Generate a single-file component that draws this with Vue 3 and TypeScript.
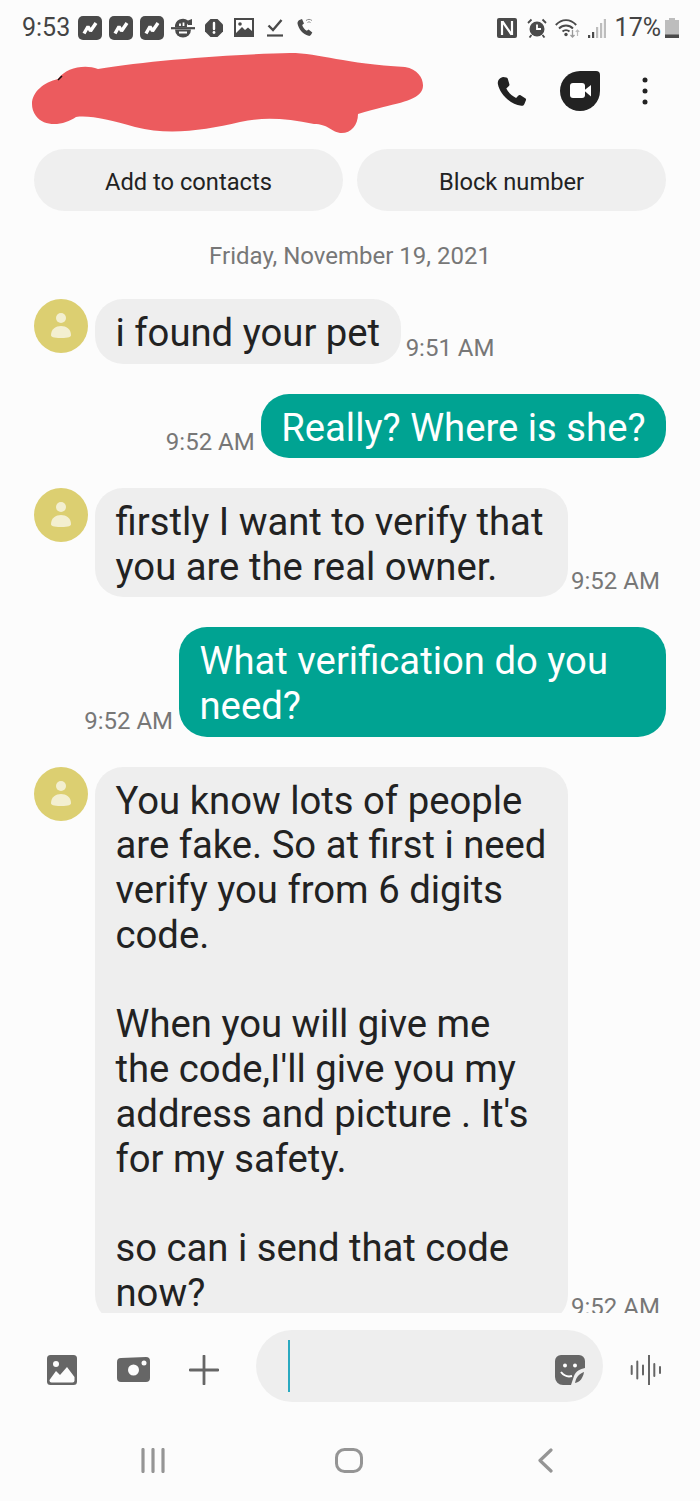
<script setup lang="ts">
interface Message {
  id: number;
  side: 'in' | 'out';
  time: string;
  lines: string;
}

const messages: Message[] = [
  { id: 1, side: 'in', time: '9:51 AM', lines: 'i found your pet' },
  { id: 2, side: 'out', time: '9:52 AM', lines: 'Really? Where is she?' },
  { id: 3, side: 'in', time: '9:52 AM', lines: 'firstly I want to verify that\nyou are the real owner.' },
  { id: 4, side: 'out', time: '9:52 AM', lines: 'What verification do you\nneed?' },
  {
    id: 5,
    side: 'in',
    time: '9:52 AM',
    lines:
      "You know lots of people\nare fake. So at first i need\nverify you from 6 digits\ncode.\n\nWhen you will give me\nthe code,I'll give you my\naddress and picture . It's\nfor my safety.\n\nso can i send that code\nnow?"
  }
];

// wrapped bubbles stretch to the max width
const isWide = (m: Message) => m.lines.includes('\n');
</script>

<template>
  <div class="phone">
    <div class="status">
      <div class="status-left">
        <span class="clock">9:53</span>
        <svg v-for="n in 3" :key="n" class="tile" viewBox="0 0 24 24">
          <rect width="24" height="24" rx="5" fill="#4a4a4a" />
          <path d="M6 17.500 10 10.500 12.500 15 18 7" fill="none" stroke="#fff" stroke-width="3.400" stroke-linejoin="bevel" />
        </svg>
        <svg class="ic-lines" viewBox="0 0 24 24">
          <path d="M4 11a8 8 0 0 1 13-6.500L21 3v6h-4l-.5-1.500A5 5 0 0 0 16 11Z" fill="#4a4a4a" />
          <path d="M4 13.500h16a8 8 0 0 1-16 0Z" fill="#4a4a4a" />
          <path d="M0 12.200h24" stroke="#4a4a4a" stroke-width="2.200" />
          <path d="M9 7.500v2.500M12.500 6.500v3.500M8 16.500h8" stroke="#fff" stroke-width="1.800" />
        </svg>
        <svg class="ic-alert" viewBox="0 0 18 18">
          <path d="M5.500 0h7L18 5.500v7L12.500 18h-7L0 12.500v-7Z" fill="#4a4a4a" />
          <path d="M9 4v6" stroke="#fff" stroke-width="2.400" stroke-linecap="round" />
          <circle cx="9" cy="13.500" r="1.400" fill="#fff" />
        </svg>
        <svg class="ic-image" viewBox="0 0 20 20">
          <rect width="20" height="19" fill="#4a4a4a" />
          <rect x="2" y="2" width="16" height="13" fill="#fff" />
          <path d="M2 15 8 9l3 3 3-2.500 4 3.500v4H2Z" fill="#4a4a4a" />
          <circle cx="6" cy="6" r="1.800" fill="#4a4a4a" />
        </svg>
        <svg class="ic-check" viewBox="0 0 18 20">
          <path d="M2.500 7.500 7 12 15.500 2" fill="none" stroke="#4a4a4a" stroke-width="2.400" />
          <path d="M1 17.500h16" stroke="#4a4a4a" stroke-width="2.200" />
        </svg>
        <svg class="ic-wificall" viewBox="0 0 18 22">
          <path d="M3.500 3 6 2l2 4.500-1.800 1.500c.7 2.500 2.300 4.500 4.600 5.800l1.800-1.400 3.700 3-1.300 2.400c-.5 1-1.500 1.300-2.500 1C7 17.500 2.500 12 1.500 6.500 1.300 5 2.300 3.600 3.500 3Z" fill="#4a4a4a" />
          <path d="M10 3.500c2-1.500 4-1.500 6 0M11.500 5.500c1-.8 2-.8 3 0" fill="none" stroke="#8a8a8a" stroke-width="1" />
        </svg>
      </div>
      <div class="status-right">
        <svg class="ic-nfc" viewBox="0 0 20 20">
          <rect width="20" height="20" rx="2" fill="#4a4a4a" />
          <path d="M5 3v14M15 3v14M5.500 3.500l9 13" fill="none" stroke="#fff" stroke-width="2.200" />
        </svg>
        <svg class="ic-alarm" viewBox="0 0 20 20">
          <circle cx="10" cy="11" r="7.500" fill="#4a4a4a" />
          <path d="M10 6.500V11h4" fill="none" stroke="#fff" stroke-width="1.800" />
          <path d="M1 5 4.500 1.500M19 5l-3.500-3.500M4.500 17l-2 2.500M15.500 17l2 2.500" stroke="#4a4a4a" stroke-width="1.800" />
        </svg>
        <svg class="ic-wifi" viewBox="0 0 25 20">
          <path d="M.8 7c6-6.500 14.400-6.500 20.400 0M4 10.500c4-4 10-4 14 0M7.500 13.500c2-1.800 5-1.800 7 0" fill="none" stroke="#4a4a4a" stroke-width="1.900" />
          <circle cx="11" cy="16.500" r="1.700" fill="#4a4a4a" />
          <path d="M17.500 12v7M15.500 17l2 2 2-2" fill="none" stroke="#9a9a9a" stroke-width="1.300" />
          <path d="M22.500 18v-6M20.800 13.800l1.700-1.800 1.700 1.800" fill="none" stroke="#bbb" stroke-width="1.200" />
        </svg>
        <svg class="ic-signal" viewBox="0 0 18 20">
          <path d="M0 20v-3h2.200v3Z" fill="#4a4a4a" />
          <path d="M4 20v-6h2.200v6Z" fill="#4a4a4a" />
          <path d="M8 20V9h2.200v11ZM12 20V5h2.200v15ZM15.800 20V1h2.200v19Z" fill="#bdbdbd" />
        </svg>
        <span class="battery-text">17%</span>
        <svg class="ic-battery" viewBox="0 0 14 20">
          <path d="M4 0h6v2h4v18H0V2h4Z" fill="#bdbdbd" />
          <rect y="16.500" width="14" height="3.500" fill="#4a4a4a" />
        </svg>
      </div>
    </div>

    <div class="header">
      <svg class="scribble" viewBox="31 52 394 82">
        <path
          d="M32 104C32 92 44 82 58 79 66 68 84 64 98 69 150 60 240 54 290 53 320 53 345 64 405 67 422 70 426 85 421 92 414 102 395 103 358 114 358 126 350 134 340 133 330 131 328 124 314 124 285 118 262 117 240 122 205 130 170 136 135 127 110 120 90 115 76 117 65 125 45 128 36 116 33 112 32 108 32 104Z"
          fill="#ec5b5e"
        />
        <path d="M58 80l4-4" stroke="#111" stroke-width="1.500" />
      </svg>
      <div class="header-actions">
        <svg class="ic-call" viewBox="0 0 30 30">
          <path d="M6 1 9 1.500c1 .3 1.300.8 1.500 1.500l1.500 5c.2 1-.2 1.500-1 2.200L9 12c2 4 5 7 9.500 9.300l2-2.200c.8-.7 1.500-.8 2.300-.4l4.500 2.800c.8.500 1 1.200.7 2l-1.500 3.500c-.5 1.200-1.500 2-3 1.900C12 27 2.500 17 .8 7.500.5 4 3 1.500 6 1Z" fill="#222" />
        </svg>
        <svg class="ic-duo" viewBox="0 0 41 40">
          <path d="M21 0h16a4 4 0 0 1 4 4v16A20 20 0 1 1 21 0Z" fill="#222" />
          <rect x="11" y="12" width="15" height="15" rx="3" fill="#fff" />
          <path d="M25 19.500 32 14v11.500Z" fill="#fff" />
        </svg>
        <svg class="ic-more" viewBox="0 0 6 28">
          <circle cx="3" cy="3" r="2.500" fill="#222" />
          <circle cx="3" cy="14" r="2.500" fill="#222" />
          <circle cx="3" cy="25" r="2.500" fill="#222" />
        </svg>
      </div>
    </div>

    <div class="quick">
      <button class="quick-btn">Add to contacts</button>
      <button class="quick-btn">Block number</button>
    </div>

    <div class="thread">
      <div class="date">Friday, November 19, 2021</div>
      <div v-for="m in messages" :key="m.id" class="row" :class="m.side">
        <svg v-if="m.side === 'in'" class="avatar" viewBox="0 0 54 54">
          <circle cx="27" cy="27" r="27" fill="#dccf71" />
          <circle cx="27" cy="19" r="5" fill="#f3efd0" />
          <path d="M17 36c0-6 5-9 10-9s10 3 10 9c0 2-2 3-10 3s-10-1-10-3Z" fill="#f3efd0" />
        </svg>
        <span v-if="m.side === 'out'" class="time">{{ m.time }}</span>
        <div class="bubble" :class="{ wide: isWide(m) }">{{ m.lines }}</div>
        <span v-if="m.side === 'in'" class="time" :class="{ tight: isWide(m) }">{{ m.time }}</span>
      </div>
    </div>

    <div class="composer">
      <svg class="ic-gallery" viewBox="0 0 30 30">
        <rect width="30" height="30" rx="3.500" fill="#666" />
        <path d="M2.500 25 9 16l4 4 7-8 7.500 10v3.500a2 2 0 0 1-2 2h-21a2 2 0 0 1-2-2Z" fill="#fcfcfc" />
        <circle cx="9" cy="9" r="3" fill="#fcfcfc" />
      </svg>
      <svg class="ic-camera" viewBox="0 0 33 25">
        <path d="M4 1 29 0a4 4 0 0 1 4 4v17a4 4 0 0 1-4 4H4a4 4 0 0 1-4-4V5a4 4 0 0 1 4-4Z" fill="#666" />
        <circle cx="16.500" cy="13" r="5.500" fill="#fcfcfc" />
        <circle cx="27" cy="6" r="2.500" fill="#fcfcfc" />
      </svg>
      <svg class="ic-plus" viewBox="0 0 30 30">
        <path d="M15 1v28M1 15h28" stroke="#666" stroke-width="2.800" stroke-linecap="round" />
      </svg>
      <div class="input">
        <span class="caret"></span>
        <svg class="ic-sticker" viewBox="0 0 30 30">
          <path d="M6 0h18a6 6 0 0 1 6 6v7c-5 1-9 3-11 8l-3 9H8a8 8 0 0 1-8-8V6a6 6 0 0 1 6-6Z" fill="#666" />
          <circle cx="10" cy="10.500" r="2" fill="#fff" />
          <circle cx="20" cy="10.500" r="2" fill="#fff" />
          <path d="M6 17c3 4 7 5 11 4" fill="none" stroke="#fff" stroke-width="2" />
          <path d="M20 28c1-6 4-9 9-11-1 6-4 10-9 11Z" fill="#666" />
        </svg>
      </div>
      <svg class="ic-wave" viewBox="0 0 32 30">
        <path d="M1.700 11v8M7.300 6.500v17M13 10.500v9M19 0v30M24.300 9v12M30 12v6" stroke="#666" stroke-width="2" stroke-linecap="round" />
      </svg>
    </div>

    <div class="nav">
      <svg class="ic-recents" viewBox="0 0 24 25">
        <path d="M2 1.500v22M12 1.500v22M22 1.500v22" stroke="#959595" stroke-width="3.200" stroke-linecap="round" />
      </svg>
      <svg class="ic-home" viewBox="0 0 28 25">
        <rect x="1.500" y="1.500" width="25" height="22" rx="8" fill="none" stroke="#959595" stroke-width="3" />
      </svg>
      <svg class="ic-back" viewBox="0 0 16 25">
        <path d="M14 2 3 12.500 14 23" fill="none" stroke="#959595" stroke-width="3.200" stroke-linecap="round" stroke-linejoin="round" />
      </svg>
    </div>
  </div>
</template>

<style scoped>
.phone {
  position: relative;
  display: flex;
  flex-direction: column;
  width: 700px;
  height: 1501px;
  overflow: hidden;
  background: #fcfcfc;
  font-family: Roboto, "Liberation Sans", sans-serif;
  color: #222;
}

.status {
  display: flex;
  justify-content: space-between;
  align-items: center;
  height: 55px;
  padding: 0 21px 0 22px;
  flex-shrink: 0;
}
.status-left,
.status-right {
  display: flex;
  align-items: center;
}
.clock {
  font-size: 25px;
  color: #444;
  width: 56px;
}
.tile {
  width: 24px;
  height: 24px;
  margin-right: 7px;
}
.ic-lines {
  width: 24px;
  height: 24px;
  margin-right: 10px;
}
.ic-alert {
  width: 18px;
  height: 18px;
  margin-right: 11px;
}
.ic-image {
  width: 20px;
  height: 20px;
  margin-right: 12px;
}
.ic-check {
  width: 18px;
  height: 20px;
  margin-right: 12px;
}
.ic-wificall {
  width: 18px;
  height: 22px;
}
.ic-nfc {
  width: 20px;
  height: 20px;
  margin-right: 10px;
}
.ic-alarm {
  width: 20px;
  height: 20px;
  margin-right: 8px;
}
.ic-wifi {
  width: 25px;
  height: 20px;
  margin-right: 8px;
}
.ic-signal {
  width: 18px;
  height: 20px;
  margin-right: 9px;
}
.battery-text {
  font-size: 25px;
  color: #444;
  margin-right: 4px;
}
.ic-battery {
  width: 14px;
  height: 20px;
}

.header {
  position: relative;
  height: 94px;
  flex-shrink: 0;
}
.scribble {
  position: absolute;
  left: 31px;
  top: -3px;
  width: 394px;
  height: 82px;
}
.header-actions {
  display: flex;
  align-items: center;
  justify-content: flex-end;
  height: 72px;
  padding-right: 52px;
}
.ic-call {
  width: 31px;
  height: 31px;
  margin-right: 31px;
}
.ic-duo {
  width: 41px;
  height: 40px;
  margin-right: 42px;
}
.ic-more {
  width: 6px;
  height: 28px;
}

.quick {
  display: flex;
  gap: 14px;
  padding: 0 34px;
  flex-shrink: 0;
}
.quick-btn {
  flex: 1;
  height: 62px;
  padding: 3px 0 0;
  border: 0;
  border-radius: 31px;
  background: #efefef;
  color: #222;
  font: 400 23.7px Roboto, "Liberation Sans", sans-serif;
}

.thread {
  display: flex;
  flex-direction: column;
  gap: 30px;
  height: 1102px;
  padding: 0 34px;
  overflow: hidden;
  flex-shrink: 0;
}
.date {
  height: 88px;
  margin-bottom: -30px;
  line-height: 90px;
  text-align: center;
  font-size: 24px;
  color: #777;
}
.row {
  display: flex;
  align-items: flex-end;
  flex-shrink: 0;
}
.row.out {
  justify-content: flex-end;
}
.avatar {
  align-self: flex-start;
  width: 54px;
  height: 54px;
  margin-right: 7px;
  flex-shrink: 0;
}
.bubble {
  box-sizing: border-box;
  padding: 12px 20.5px 7.75px;
  border-radius: 28px;
  background: #eeeeee;
  color: #222;
  font-size: 38.25px;
  line-height: 44.75px;
  white-space: pre;
}
.bubble.wide {
  width: 473px;
}
.out .bubble {
  background: #00a392;
  color: #fff;
}
.out .bubble.wide {
  width: 487px;
}
.time {
  margin: 0 6px 2px 5px;
  font-size: 24px;
  line-height: 28px;
  color: #777;
  white-space: nowrap;
}
.time.tight {
  margin-left: 3px;
}

.composer {
  display: flex;
  align-items: center;
  height: 89px;
  margin-top: 8px;
  flex-shrink: 0;
}
.composer > svg {
  margin-top: 8px;
}
.ic-gallery {
  width: 30px;
  height: 30px;
  margin-left: 47px;
}
.ic-camera {
  width: 33px;
  height: 25px;
  margin-left: 40px;
}
.ic-plus {
  width: 30px;
  height: 30px;
  margin-left: 39px;
}
.input {
  display: flex;
  align-items: center;
  justify-content: space-between;
  width: 347px;
  height: 72px;
  margin-left: 37px;
  padding: 0 18px 0 32px;
  box-sizing: border-box;
  border-radius: 36px;
  background: #eeeeee;
}
.caret {
  width: 2px;
  height: 52px;
  background: #2aa9c0;
}
.ic-sticker {
  width: 30px;
  height: 30px;
  margin-top: 8px;
}
.ic-wave {
  width: 32px;
  height: 30px;
  margin-left: 27px;
}

.nav {
  display: flex;
  align-items: center;
  height: 91px;
  padding-top: 9px;
  box-sizing: border-box;
  flex-shrink: 0;
}
.ic-recents {
  width: 24px;
  height: 25px;
  margin-left: 141px;
}
.ic-home {
  width: 28px;
  height: 25px;
  margin-left: 170px;
}
.ic-back {
  width: 16px;
  height: 25px;
  margin-left: 174px;
}
</style>
